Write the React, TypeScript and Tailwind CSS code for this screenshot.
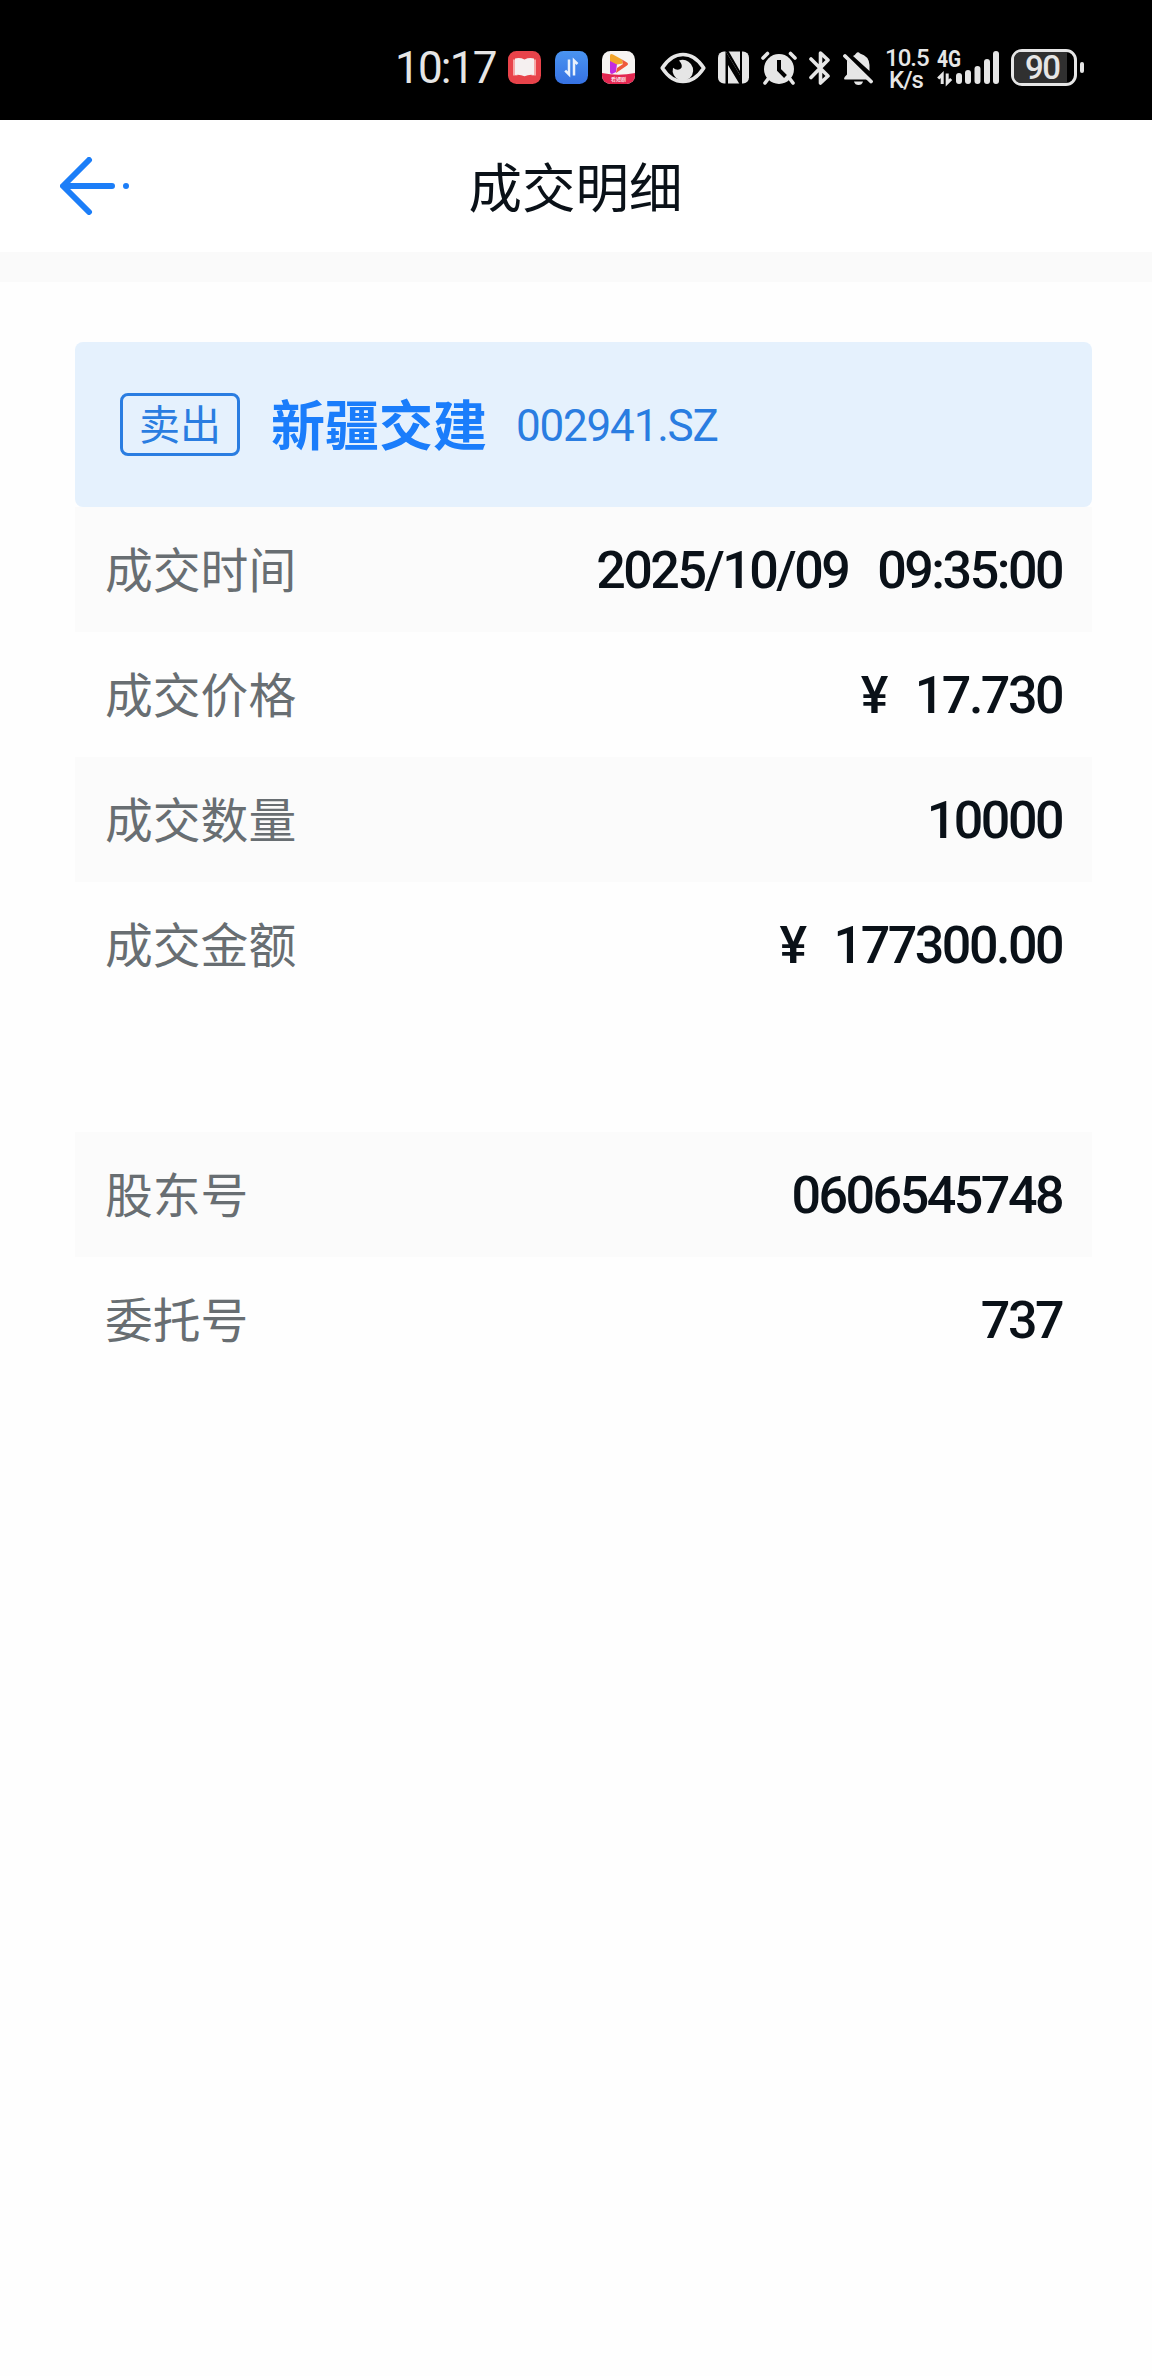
import React from "react";

const details = [
  { label: "成交时间", value: ["2025/10/09", "09:35:00"], shaded: true },
  { label: "成交价格", value: ["¥", "17.730"] },
  { label: "成交数量", value: ["10000"], shaded: true },
  { label: "成交金额", value: ["¥", "177300.00"] },
  null,
  { label: "股东号", value: ["0606545748"], shaded: true },
  { label: "委托号", value: ["737"] },
];

function AppBadges() {
  return (
    <div className="ml-3 flex gap-3.5">
      <svg width="33" height="33" viewBox="0 0 33 33">
        <rect width="33" height="33" rx="8.5" fill="#e8434a" />
        <path d="M5 8.5h4.500v16H5z M23.500 8.500H28v16h-4.500z" fill="#f6a9a8" />
        <path
          d="M7 7.500q5-1.200 9.500 1q4.500-2.200 9.500-1v16.500q-5-.8-9.500 1.300q-4.500-2.100-9.500-1.300z"
          fill="#f5f0f0"
        />
      </svg>
      <svg width="33" height="33" viewBox="0 0 33 33">
        <defs>
          <linearGradient id="transfer" x1="0" y1="0" x2="0" y2="1">
            <stop offset="0" stopColor="#4a94f0" />
            <stop offset="1" stopColor="#3672e4" />
          </linearGradient>
        </defs>
        <rect width="33" height="33" rx="8.5" fill="url(#transfer)" />
        <path
          d="M14 8.500v15l-3.800-3.800 M19 24.500V9.500l3.500 3.500"
          fill="none"
          stroke="#e9f1fc"
          strokeWidth="2.500"
        />
      </svg>
      <svg width="33" height="33" viewBox="0 0 33 33">
        <clipPath id="video">
          <rect width="33" height="33" rx="8.5" />
        </clipPath>
        <g clipPath="url(#video)">
          <rect width="33" height="33" fill="#f6f4f2" />
          <path d="M0 22q16.500 3.500 33 0v11H0z" fill="#e32750" />
          <path d="M8 9l7 4-1 8-4 2q-2 0-2-2z" fill="#c32be0" />
          <path d="M8 5q0-3 3-1.500l9 5 1 4-6 1-7-3.500z" fill="#f2a52c" />
          <path d="M20 8.500l5 3q2 1.500 0 3l-11 7.500 1-5 6-4z" fill="#ef5a3b" />
        </g>
        <text
          x="16.500"
          y="30"
          fontSize="5"
          fontWeight="700"
          textAnchor="middle"
          fill="#fbdde3"
        >
          看短剧
        </text>
      </svg>
    </div>
  );
}

function StatusIcons() {
  return (
    <>
      {/* eye comfort */}
      <svg className="ml-[25px]" width="46" height="34" viewBox="0 0 46 34">
        <path
          d="M2.200 17Q11 3.500 23 3.500T43.800 17Q35 30.500 23 30.500T2.200 17z"
          fill="none"
          stroke="#e6e6e6"
          strokeWidth="3.600"
          strokeLinejoin="round"
        />
        <path
          d="M19 9.500q5-1.800 9.500 1.200a10.300 10.300 0 1 1-15.500 6q4 3.500 7.500 1t-1.500-8.200z"
          fill="#e6e6e6"
        />
      </svg>
      {/* nfc */}
      <svg className="ml-3" width="31" height="33" viewBox="0 0 31 33">
        <rect y="0.500" width="31" height="32" rx="6" fill="#e6e6e6" />
        <path d="M7.500 0L22 24V0h2v33h-2.500L10 14v19H7.500z" fill="#000" />
        <path d="M7.500 0L22 24v-4L10.500 0z" fill="#000" />
      </svg>
      {/* alarm */}
      <svg className="ml-3" width="36" height="34" viewBox="0 0 36 34">
        <circle cx="18" cy="18" r="15" fill="#e6e6e6" />
        <path
          d="M2 7l4.500-4.500 M34 7l-4.500-4.500 M7 28l-3 4 M29 28l3 4"
          stroke="#e6e6e6"
          strokeWidth="3.600"
          strokeLinecap="round"
        />
        <path
          d="M18 9v10l6.500 6.500"
          fill="none"
          stroke="#000"
          strokeWidth="4"
        />
      </svg>
      {/* bluetooth */}
      <svg className="ml-3" width="22" height="34" viewBox="0 0 22 34">
        <path
          d="M2 8l17 17-7.500 7V2l7.500 7L2 26.500"
          fill="none"
          stroke="#e6e6e6"
          strokeWidth="3.600"
          strokeLinecap="round"
          strokeLinejoin="round"
        />
      </svg>
      {/* muted */}
      <svg className="ml-3" width="30" height="34" viewBox="0 0 30 34">
        <path d="M4 9l21 19.500H1.500q-1-1 .2-2.500L4 23.500z" fill="#e6e6e6" />
        <path
          d="M10 5q2-1 3-2.500 2-2.500 4 0Q26 5 26.500 14v6z"
          fill="#e6e6e6"
        />
        <path d="M11 30.500h9q-1 3.500-4.500 3.500T11 30.500z" fill="#e6e6e6" />
        <path
          d="M2 5l26 25.500"
          stroke="#e6e6e6"
          strokeWidth="3.800"
          strokeLinecap="round"
        />
      </svg>
    </>
  );
}

function Signal() {
  return (
    <svg className="ml-2.5" width="63" height="52" viewBox="0 -8 63 52">
      <text
        x="0"
        y="17"
        fontSize="23"
        fontWeight="700"
        textLength="24"
        lengthAdjust="spacingAndGlyphs"
        fill="#e6e6e6"
      >
        4G
      </text>
      <path
        d="M5.200 34V24.500l-4 4 M10.200 23.500V33l4-4"
        fill="none"
        stroke="#e6e6e6"
        strokeWidth="3"
      />
      <g fill="#e6e6e6">
        <rect x="19" y="23" width="6" height="11" rx="3" />
        <rect x="28" y="20" width="6" height="14" rx="3" />
        <rect x="37.500" y="16" width="6" height="18" rx="3" />
        <rect x="47" y="9" width="6" height="25" rx="3" />
        <rect x="56" y="1" width="6" height="33" rx="3" />
      </g>
    </svg>
  );
}

function Battery() {
  return (
    <div className="ml-[11px] flex items-center gap-[3px]">
      <div className="flex h-[37px] w-[66px] rounded-[11px] border-3 border-[#e6e6e6]">
        <div className="flex w-[53px] items-center rounded-l-[7px] bg-[#303030] pl-[11px] text-[33px] leading-none font-medium tracking-[-1.500px]">
          90
        </div>
      </div>
      <div className="h-[11px] w-1 rounded-full bg-[#e6e6e6]" />
    </div>
  );
}

function StatusBar() {
  return (
    <div className="flex h-[120px] items-center bg-black pt-[15px] pl-[395px] text-[#e6e6e6]">
      <div className="w-[101px] pt-px text-[44px] leading-none tracking-[-1.800px] whitespace-nowrap">
        10:17
      </div>
      <AppBadges />
      <StatusIcons />
      <div className="ml-3 w-[42px] pt-0.5 text-center text-[24px] leading-[22px] font-medium tracking-[-1px]">
        <div>10.5</div>
        <div>K/s</div>
      </div>
      <Signal />
      <Battery />
    </div>
  );
}

function Header() {
  return (
    <header className="flex h-[162px] items-center border-b-[30px] border-[#fafafa] bg-white px-[60px]">
      <svg width="70" height="58" viewBox="0 0 70 58">
        <path
          d="M29 3L3 29l26 26 M4 29h48 M66 29h.01"
          fill="none"
          stroke="#1c7ef8"
          strokeWidth="6"
          strokeLinecap="round"
          strokeLinejoin="round"
        />
      </svg>
      <h1 className="flex-1 pt-[8px] pr-[71px] text-center text-[53.500px] leading-none text-[#0a1118]">
        成交明细
      </h1>
    </header>
  );
}

export default function App() {
  return (
    <div className="min-h-[2376px] w-[1152px] bg-[#fefefe] font-['Roboto','Noto_Sans_CJK_SC',sans-serif]">
      <StatusBar />
      <Header />
      <main className="pt-[60px] pr-[60px] pl-[75px]">
        <div className="flex h-[165px] items-center rounded-lg bg-[#e5f1fd] pl-[45px]">
          <span className="flex h-[63px] w-[120px] items-center justify-center rounded-lg border-3 border-[#2a7de1] pt-1 text-[41px] leading-none text-[#2a7de1]">
            卖出
          </span>
          <span className="ml-[31px] pt-1.5 text-[54px] leading-none font-bold text-[#1a7dfb]">
            新疆交建
          </span>
          <span className="ml-[29px] pt-[3px] text-[44px] leading-none tracking-[-1.200px] text-[#2a7de1]">
            002941.SZ
          </span>
        </div>
        {details.map((row, i) => (
          <div
            key={i}
            className={`flex h-[125px] items-center justify-between px-[30px] pt-[3px] ${
              row?.shaded ? "bg-[#fbfbfb]" : ""
            }`}
          >
            {row && (
              <>
                <span className="pt-[3px] text-[47.800px] leading-none text-[#686e72]">
                  {row.label}
                </span>
                <span className="flex gap-[29px] text-[52px] leading-none font-medium tracking-[-2.500px] text-[#0a1118]">
                  {row.value.map((part) => (
                    <span key={part}>{part}</span>
                  ))}
                </span>
              </>
            )}
          </div>
        ))}
      </main>
    </div>
  );
}
